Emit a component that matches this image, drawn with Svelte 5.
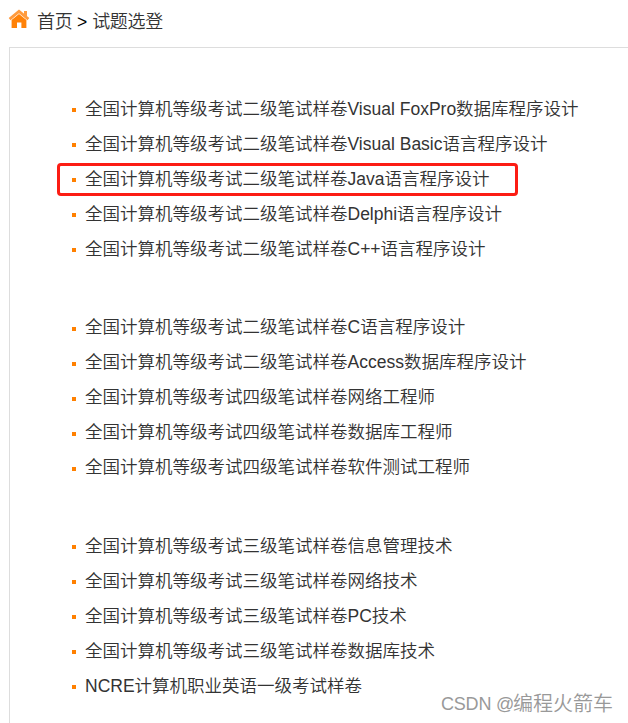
<script>
  const groups = [
    [
      '全国计算机等级考试二级笔试样卷Visual FoxPro数据库程序设计',
      '全国计算机等级考试二级笔试样卷Visual Basic语言程序设计',
      '全国计算机等级考试二级笔试样卷Java语言程序设计',
      '全国计算机等级考试二级笔试样卷Delphi语言程序设计',
      '全国计算机等级考试二级笔试样卷C++语言程序设计'
    ],
    [
      '全国计算机等级考试二级笔试样卷C语言程序设计',
      '全国计算机等级考试二级笔试样卷Access数据库程序设计',
      '全国计算机等级考试四级笔试样卷网络工程师',
      '全国计算机等级考试四级笔试样卷数据库工程师',
      '全国计算机等级考试四级笔试样卷软件测试工程师'
    ],
    [
      '全国计算机等级考试三级笔试样卷信息管理技术',
      '全国计算机等级考试三级笔试样卷网络技术',
      '全国计算机等级考试三级笔试样卷PC技术',
      '全国计算机等级考试三级笔试样卷数据库技术',
      'NCRE计算机职业英语一级考试样卷'
    ]
  ];
</script>

<div class="page">
  <nav>
    <svg width="22" height="20" viewBox="0 0 22 20">
      <path d="M3.6 11 11 5l7.4 6v8h-5v-5.5H9V19H3.6z" fill="#ff8208" />
      <path d="M1.6 10.2 11 2.4l9.4 7.8" fill="none" stroke="#ff9b3e" stroke-width="2.8" />
      <path d="M16 2h3v6.5L16 6z" fill="#ff9b3e" />
    </svg>
    <a href="#home">首页</a><span class="sep">&gt;</span><a href="#samples">试题选登</a>
  </nav>
  <main>
    {#each groups as group}
      <ul>
        {#each group as title}
          <li class:marked={title.includes('Java')}><i></i><a href="#paper">{title}</a></li>
        {/each}
      </ul>
    {/each}
  </main>
  <div class="watermark"><span>CSDN @</span>编程火箭车</div>
</div>

<style>
  :global(body) { background: #fff; }
  .page {
    position: relative;
    width: 628px;
    height: 723px;
    overflow: hidden;
    box-sizing: border-box;
    font: 350 17.5px/35px "Liberation Sans", "Noto Sans CJK SC", sans-serif;
    color: #333;
  }
  a { color: inherit; text-decoration: none; }
  nav {
    display: flex;
    height: 47px;
    padding-left: 8px;
    box-sizing: border-box;
    line-height: 45px;
  }
  nav svg { margin: 9px 7px 0 0; flex: none; }
  nav a { font-size: 18px; letter-spacing: -0.3px; }
  .sep { color: #000; margin: 0 5px 0 4.5px; }
  main {
    margin-left: 9px;
    height: 676px;
    border: 1px solid #ddd;
    border-right: 0;
    border-bottom: 0;
    padding: 43px 0 0 62px;
    box-sizing: border-box;
  }
  ul { list-style: none; margin: 0 0 43px; padding: 0; }
  ul:nth-child(2) { margin-bottom: 44px; }
  li {
    position: relative;
    display: flex;
    align-items: center;
    height: 35px;
    white-space: nowrap;
  }
  li a { padding-top: 2px; }
  i { width: 4px; height: 4px; margin: 2px 9px 0 0; background: #ff8000; flex: none; }
  ul:nth-child(2) i { margin-top: 4px; }
  .marked::after {
    content: "";
    position: absolute;
    left: -15px;
    top: 2px;
    width: 461px;
    height: 33px;
    box-sizing: border-box;
    border: 3px solid #fc1d14;
    border-radius: 4px;
  }
  .watermark {
    position: absolute;
    left: 441px;
    top: 690px;
    display: flex;
    font-size: 20px;
    line-height: 28px;
    color: #999;
    white-space: nowrap;
  }
  .watermark span { width: 72px; font-size: 18px; letter-spacing: -0.2px; }
</style>
